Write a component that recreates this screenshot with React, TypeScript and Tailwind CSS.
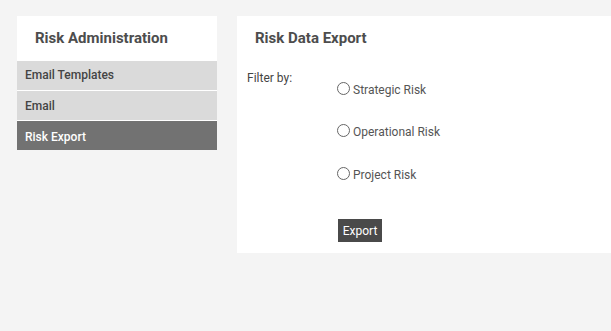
import React from 'react'

const options = [
  { label: 'Strategic Risk', mt: 'mt-0' },
  { label: 'Operational Risk', mt: 'mt-[27px]' },
  { label: 'Project Risk', mt: 'mt-[28px]' },
]

export default function App() {
  return (
    <div
      className="w-[611px] h-[331px] overflow-hidden bg-[#f4f4f4] flex items-start gap-5 pt-4 pl-[17px]"
      style={{ fontFamily: 'Roboto, "Liberation Sans", sans-serif' }}
    >
      {/* Sidebar */}
      <div className="w-[200px] shrink-0 flex flex-col">
        <div className="bg-white h-[45px] flex items-center pl-[18px] text-[15px] font-bold text-[#4d4d4d]">
          Risk Administration
        </div>
        <div className="bg-[#dadada] h-[29px] flex items-center pl-2 pb-[1px] text-[12px] font-medium text-[#444]">
          Email Templates
        </div>
        <div className="bg-white h-px" />
        <div className="bg-[#dadada] h-[29px] flex items-center pl-2 text-[12px] font-medium text-[#444]">
          Email
        </div>
        <div className="bg-white h-px" />
        <div className="bg-[#727272] h-[29px] flex items-center pl-2 pt-[3px] text-[12px] font-medium text-white">
          Risk Export
        </div>
      </div>

      {/* Main panel */}
      <div className="flex-1 bg-white h-[237px] flex flex-col">
        <div className="h-[45px] flex items-center pl-[18px] text-[15px] font-bold text-[#4d4d4d]">
          Risk Data Export
        </div>
        <div className="flex pl-[10px] pt-[8px]">
          <div className="w-[90px] text-[12px] text-[#444]">Filter by:</div>
          <div className="flex flex-col items-start pt-[13px]">
            {options.map((o) => (
              <label key={o.label} className={`flex items-center h-[15px] text-[12px] text-[#555] ${o.mt}`}>
                <span className="w-[13px] h-[13px] rounded-full border border-[#666] bg-white mr-[3px] -mt-[3px]" />
                {o.label}
              </label>
            ))}
            <button className="mt-[37px] ml-[1px] w-[44px] h-[23px] bg-[#4a4a4a] text-white text-[12px] flex items-center justify-center">
              Export
            </button>
          </div>
        </div>
      </div>
    </div>
  )
}
